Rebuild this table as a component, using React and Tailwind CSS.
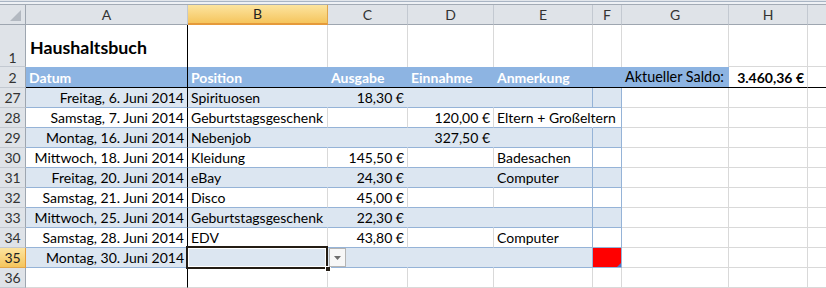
import React from "react";

// column widths (each includes its 1px right gridline)
const W = {
  rh: "w-[26px]",
  A: "w-[162px]",
  B: "w-[140px]",
  C: "w-[80px]",
  D: "w-[86px]",
  E: "w-[99px]",
  F: "w-[29px]",
  G: "w-[107px]",
  H: "w-[79px]",
  I: "w-[19px]",
};

const rows = [
  { n: 27, date: "Freitag, 6. Juni 2014", pos: "Spirituosen", out: "18,30 €", inc: "", note: "" },
  { n: 28, date: "Samstag, 7. Juni 2014", pos: "Geburtstagsgeschenk", out: "", inc: "120,00 €", note: "Eltern + Großeltern" },
  { n: 29, date: "Montag, 16. Juni 2014", pos: "Nebenjob", out: "", inc: "327,50 €", note: "" },
  { n: 30, date: "Mittwoch, 18. Juni 2014", pos: "Kleidung", out: "145,50 €", inc: "", note: "Badesachen" },
  { n: 31, date: "Freitag, 20. Juni 2014", pos: "eBay", out: "24,30 €", inc: "", note: "Computer" },
  { n: 32, date: "Samstag, 21. Juni 2014", pos: "Disco", out: "45,00 €", inc: "", note: "" },
  { n: 33, date: "Mittwoch, 25. Juni 2014", pos: "Geburtstagsgeschenk", out: "22,30 €", inc: "", note: "" },
  { n: 34, date: "Samstag, 28. Juni 2014", pos: "EDV", out: "43,80 €", inc: "", note: "Computer" },
  { n: 35, date: "Montag, 30. Juni 2014", pos: "", out: "", inc: "", note: "" },
];

function ColHeader({ w, label, active }) {
  if (active) {
    return (
      <div className={`${w} shrink-0 h-full flex items-center justify-center bg-gradient-to-b from-[#fce49e] to-[#f5c55c] border-r border-b-2 border-r-[#e0a64c] border-b-[#e59a3a] text-[#222]`}>
        {label}
      </div>
    );
  }
  return (
    <div className={`${w} shrink-0 h-full flex items-center justify-center bg-[#dfe3e8] border-r border-b border-r-[#c3c9d1] border-b-[#9ea6b0] text-[#333]`}>
      {label}
    </div>
  );
}

function RowHeader({ n, active, h = "h-full", end }) {
  return (
    <div
      className={`w-[26px] shrink-0 ${h} flex ${end ? "items-end pb-[1px]" : "items-center pt-[1px]"} justify-center border-r border-b ${
        active
          ? "bg-gradient-to-b from-[#fce49e] to-[#f5c55c] border-r-[#e59a3a] border-b-[#e0a64c] text-[#222]"
          : "bg-[#dfe3e8] border-r-[#9ea6b0] border-b-[#c3c9d1] text-[#333]"
      }`}
    >
      {n}
    </div>
  );
}

function Grid({ w, className = "" }) {
  return <div className={`${w} shrink-0 h-full border-r border-b border-[#d9d9d9] ${className}`} />;
}

function DataRow({ r }) {
  const band = r.n % 2 === 1;
  const bg = band ? "bg-[#dce6f1]" : "bg-white";
  const inner = band ? "border-r-[#dce6f1]" : "border-r-[#d9d9d9]";
  const last = r.n === 35;
  return (
    <div className="flex h-[20px] text-[14px] leading-none">
      <RowHeader n={r.n} active={last} />
      <div className={`${W.A} shrink-0 ${bg} border-r border-b border-r-black border-b-[#95b3d7] flex items-center justify-end pr-[3px] pt-[1px] whitespace-nowrap`}>
        {r.date}
      </div>
      <div className={`${W.B} shrink-0 ${bg} relative border-r border-b ${inner} border-b-[#95b3d7] flex items-center pl-[3px] pt-[1px] whitespace-nowrap`}>
        {r.pos}
        {last && (
          <>
            {/* active cell frame with fill handle */}
            <div className="absolute left-[-2px] top-[-2px] w-[142px] h-[23px] border-[2px] border-[#231c14] shadow-[inset_0_0_0_1px_#ffffff] pointer-events-none" />
            <div className="absolute right-[-4px] bottom-[-5px] w-[6px] h-[6px] bg-[#231c14] border border-white" />
            {/* validation dropdown button */}
            <div className="absolute left-[141px] top-[0px] w-[17px] h-[19px] bg-[#f7f7f7] border border-[#b4b4b4] flex items-center justify-center z-10">
              <svg width="7" height="4" viewBox="0 0 7 4">
                <path d="M0 0 H7 L3.5 4 Z" fill="#6d6d6d" />
              </svg>
            </div>
          </>
        )}
      </div>
      <div className={`${W.C} shrink-0 ${bg} border-r border-b ${inner} border-b-[#95b3d7] flex items-center justify-end pr-[3px] pt-[1px] whitespace-nowrap`}>
        {r.out}
      </div>
      <div className={`${W.D} shrink-0 ${bg} border-r border-b ${inner} border-b-[#95b3d7] flex items-center justify-end pr-[3px] pt-[1px] whitespace-nowrap`}>
        {r.inc}
      </div>
      <div className={`${W.E} shrink-0 ${bg} relative border-r border-b ${r.note.length > 12 ? "border-r-white" : "border-r-[#95b3d7]"} border-b-[#95b3d7] flex items-center pl-[3px] pt-[1px] whitespace-nowrap`}>
        <span className="relative z-10">{r.note}</span>
      </div>
      <div className={`${W.F} shrink-0 relative border-r border-b border-r-[#95b3d7] border-b-[#95b3d7] ${last ? "bg-[#ff0000]" : bg}`}>
        {last && (
          <svg className="absolute right-0 bottom-0" width="4" height="4" viewBox="0 0 4 4">
            <path d="M4 0 V4 H0 Z" fill="#4f73c4" />
          </svg>
        )}
      </div>
      <Grid w={W.G} />
      <Grid w={W.H} />
      <Grid w={W.I} />
    </div>
  );
}

export default function App() {
  return (
    <div className="w-[826px] h-[288px] overflow-hidden bg-white text-black font-['Lato',sans-serif]">
      {/* window chrome strip above the headers */}
      <div className="h-[1px] bg-[#e2e6eb]" />
      <div className="h-[1px] bg-[#a9b5c4]" />
      <div className="h-[2px] bg-[#eef1f5]" />
      <div className="h-[1px] bg-[#a3abb5]" />

      {/* column letters */}
      <div className="flex h-[20px] text-[14px] leading-none">
        <div className="w-[26px] shrink-0 h-full relative bg-[#dfe3e8] border-r border-b border-[#9ea6b0]">
          <svg className="absolute left-[10px] top-[5px]" width="11" height="11" viewBox="0 0 11 11">
            <path d="M11 0 V11 H0 Z" fill="#b3b9c1" />
          </svg>
        </div>
        <ColHeader w={W.A} label="A" />
        <ColHeader w={W.B} label="B" active />
        <ColHeader w={W.C} label="C" />
        <ColHeader w={W.D} label="D" />
        <ColHeader w={W.E} label="E" />
        <ColHeader w={W.F} label="F" />
        <ColHeader w={W.G} label="G" />
        <ColHeader w={W.H} label="H" />
        <ColHeader w={W.I} label="" />
      </div>

      {/* row 1: title */}
      <div className="flex h-[42px] text-[14px] leading-none">
        <RowHeader n={1} end />
        <div className={`${W.A} shrink-0 h-full border-r border-r-black flex items-end pl-[4px] pb-[10px]`}>
          <span className="font-bold text-[17.8px]">Haushaltsbuch</span>
        </div>
        <div className={`${W.B} shrink-0 h-full border-r border-[#d9d9d9]`} />
        <div className={`${W.C} shrink-0 h-full border-r border-[#d9d9d9]`} />
        <div className={`${W.D} shrink-0 h-full border-r border-[#d9d9d9]`} />
        <div className={`${W.E} shrink-0 h-full border-r border-[#d9d9d9]`} />
        <div className={`${W.F} shrink-0 h-full border-r border-[#d9d9d9]`} />
        <div className={`${W.G} shrink-0 h-full border-r border-[#d9d9d9]`} />
        <div className={`${W.H} shrink-0 h-full border-r border-b border-[#d9d9d9]`} />
        <div className={`${W.I} shrink-0 h-full border-r border-b border-[#d9d9d9]`} />
      </div>

      {/* row 2: table header */}
      <div className="flex h-[21px] text-[14px] leading-none">
        <div className="w-[26px] shrink-0 h-full flex items-center justify-center pt-[1px] bg-[#dfe3e8] border-r border-b border-r-[#9ea6b0] border-b-[#c3c9d1] text-[#333]">
          2
        </div>
        <div className={`${W.A} shrink-0 h-full bg-[#8db4e2] border-r border-b border-r-black border-b-black flex items-center pl-[3px] pt-[1px] font-bold text-white`}>
          Datum
        </div>
        <div className={`${W.B} shrink-0 h-full bg-[#8db4e2] border-b border-black flex items-center pl-[3px] pt-[1px] font-bold text-white`}>
          Position
        </div>
        <div className={`${W.C} shrink-0 h-full bg-[#8db4e2] border-b border-black flex items-center pl-[3px] pt-[1px] font-bold text-white`}>
          Ausgabe
        </div>
        <div className={`${W.D} shrink-0 h-full bg-[#8db4e2] border-b border-black flex items-center pl-[3px] pt-[1px] font-bold text-white`}>
          Einnahme
        </div>
        <div className={`${W.E} shrink-0 h-full bg-[#8db4e2] border-b border-black flex items-center pl-[3px] pt-[1px] font-bold text-white`}>
          Anmerkung
        </div>
        <div className={`${W.F} shrink-0 h-full bg-[#8db4e2] border-b border-black`} />
        <div className={`${W.G} shrink-0 h-full bg-[#8db4e2] border-b border-black flex items-center pl-[3px] pt-[1px] text-[14.4px]`}>
          Aktueller Saldo:
        </div>
        <div className={`${W.H} shrink-0 h-full border-r border-r-[#d9d9d9] border-b border-b-black flex items-center justify-end pr-[3px] pt-[1px] font-bold whitespace-nowrap`}>
          3.460,36 €
        </div>
        <div className={`${W.I} shrink-0 h-full border-r border-r-[#d9d9d9] border-b border-b-black`} />
      </div>

      {rows.map((r) => (
        <DataRow key={r.n} r={r} />
      ))}

      {/* row 36: empty */}
      <div className="flex h-[20px] text-[14px] leading-none">
        <RowHeader n={36} />
        <Grid w={W.A} className="border-r-black" />
        <Grid w={W.B} />
        <Grid w={W.C} />
        <Grid w={W.D} />
        <Grid w={W.E} />
        <Grid w={W.F} />
        <Grid w={W.G} />
        <Grid w={W.H} />
        <Grid w={W.I} />
      </div>
    </div>
  );
}
